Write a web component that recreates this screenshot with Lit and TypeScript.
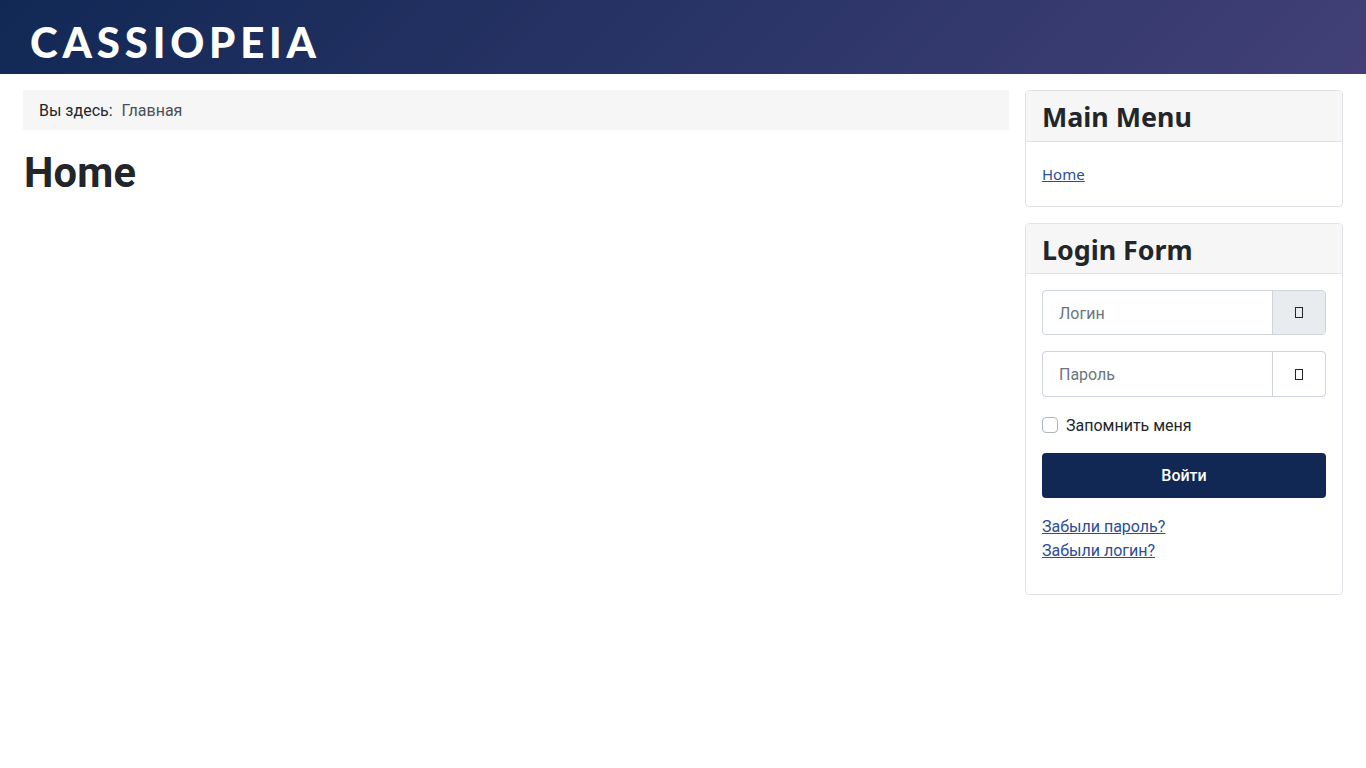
import { LitElement, css, html } from 'lit';
import { customElement } from 'lit/decorators.js';

@customElement('app-root')
export class AppRoot extends LitElement {
  static override styles = css`
    :host {
      display: block;
      min-height: 768px;
      background: #fff;
      color: #22262a;
      font: 16px/24px Roboto, sans-serif;
    }

    a {
      color: #2a4d96;
    }

    .header {
      display: flex;
      align-items: center;
      box-sizing: border-box;
      height: 74px;
      padding: 9px 0 0 30px;
      background: linear-gradient(135deg, #112855 0%, #424077 100%);
    }

    .logo {
      color: #fff;
      font: 900 42px/1 Lato, sans-serif;
      letter-spacing: 4.8px;
    }

    .layout {
      display: grid;
      grid-template-columns: 986px 318px;
      gap: 16px;
      padding: 16px 23px;
    }

    .crumbs {
      display: flex;
      gap: 9px;
      height: 40px;
      box-sizing: border-box;
      align-items: center;
      padding: 2px 16px 0;
      background: #f6f6f6;
    }

    .crumbs .current {
      color: #495057;
    }

    h1 {
      margin: 21px 0 0 1px;
      font: 700 41.6px/44px Roboto, sans-serif;
      letter-spacing: 0.2px;
    }

    .sidebar {
      display: flex;
      flex-direction: column;
      gap: 16px;
    }

    .card {
      border: 1px solid #dfe3e7;
      border-radius: 4px;
    }

    .card h3 {
      margin: 0;
      height: 50px;
      padding: 8px 16px 0;
      box-sizing: border-box;
      border-bottom: 1px solid #dfe3e7;
      background: #f6f6f6;
      font: 700 26.8px/36px 'Noto Sans', sans-serif;
      border-radius: 3px 3px 0 0;
    }

    .card h3.first {
      height: 51px;
    }

    .card-body {
      padding: 16px;
    }

    .menu-body {
      height: 64px;
      box-sizing: border-box;
      padding-top: 20px;
    }

    .menu-link {
      font-family: 'Noto Sans', sans-serif;
      font-size: 15px;
    }

    .field {
      display: flex;
      height: 45px;
      border: 1px solid #ced4da;
      border-radius: 4px;
      box-sizing: border-box;
      margin-bottom: 16px;
      overflow: hidden;
    }

    .field.tall {
      height: 46px;
    }

    .placeholder {
      flex: 1;
      display: flex;
      align-items: center;
      padding: 2px 0 0 16px;
      color: #6c757d;
    }

    .addon {
      display: flex;
      align-items: center;
      justify-content: center;
      width: 52px;
      border-left: 1px solid #ced4da;
    }

    .addon.filled {
      background: #e9ecef;
    }

    .tofu {
      width: 6px;
      height: 9px;
      border: 1px solid #22262a;
    }

    .remember {
      display: flex;
      align-items: center;
      gap: 8px;
      height: 24px;
      margin-bottom: 16px;
    }

    .remember .label {
      padding-top: 2px;
    }

    .box {
      width: 14px;
      height: 14px;
      border: 1px solid #adb5bd;
      border-radius: 4px;
    }

    .submit {
      display: flex;
      align-items: center;
      justify-content: center;
      height: 45px;
      border-radius: 4px;
      background: #112855;
      color: #fff;
      font-weight: 500;
      margin-bottom: 17px;
    }

    .links {
      display: flex;
      flex-direction: column;
      align-items: flex-start;
      padding-bottom: 15px;
    }
  `;

  override render() {
    return html`
      <div class="header"><div class="logo">CASSIOPEIA</div></div>
      <div class="layout">
        <main>
          <div class="crumbs"><span>Вы здесь:</span><span class="current">Главная</span></div>
          <h1>Home</h1>
        </main>
        <aside class="sidebar">
          <section class="card">
            <h3 class="first">Main Menu</h3>
            <div class="card-body menu-body"><a class="menu-link" href="#">Home</a></div>
          </section>
          <section class="card">
            <h3>Login Form</h3>
            <div class="card-body">
              <div class="field">
                <div class="placeholder">Логин</div>
                <div class="addon filled"><span class="tofu"></span></div>
              </div>
              <div class="field tall">
                <div class="placeholder">Пароль</div>
                <div class="addon"><span class="tofu"></span></div>
              </div>
              <div class="remember"><span class="box"></span><span class="label">Запомнить меня</span></div>
              <div class="submit">Войти</div>
              <div class="links">
                <a href="#">Забыли пароль?</a>
                <a href="#">Забыли логин?</a>
              </div>
            </div>
          </section>
        </aside>
      </div>
    `;
  }
}

declare global {
  interface HTMLElementTagNameMap {
    'app-root': AppRoot;
  }
}
